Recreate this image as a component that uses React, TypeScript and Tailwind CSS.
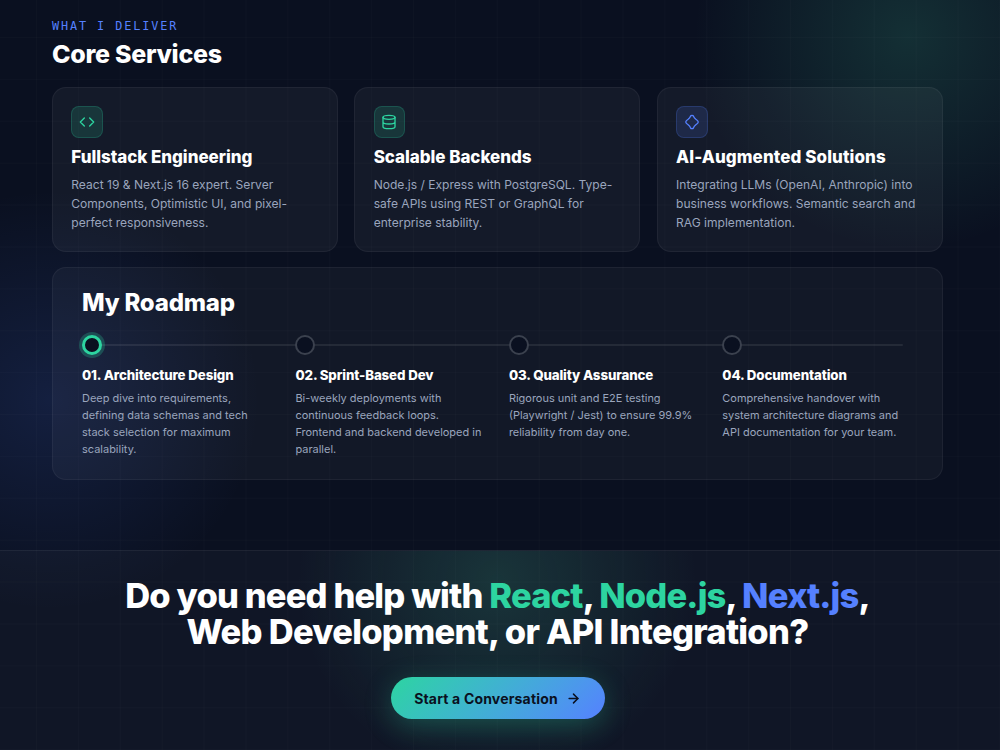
import React from "react";
import { ArrowRight } from "lucide-react";

const services = [
  { kind: "code", title: "Fullstack Engineering", track: "tracking-[-0.04px]", lines: ["React 19 & Next.js 16 expert. Server", "Components, Optimistic UI, and pixel-", "perfect responsiveness."] },
  { kind: "db", title: "Scalable Backends", track: "tracking-[-0.05px]", lines: ["Node.js / Express with PostgreSQL. Type-", "safe APIs using REST or GraphQL for", "enterprise stability."] },
  { kind: "ai", title: "AI-Augmented Solutions", track: "tracking-[0.09px]", lines: ["Integrating LLMs (OpenAI, Anthropic) into", "business workflows. Semantic search and", "RAG implementation."] },
];

const steps = [
  { title: "01. Architecture Design", lines: ["Deep dive into requirements,", "defining data schemas and tech", "stack selection for maximum", "scalability."] },
  { title: "02. Sprint-Based Dev", lines: ["Bi-weekly deployments with", "continuous feedback loops.", "Frontend and backend developed in", "parallel."] },
  { title: "03. Quality Assurance", lines: ["Rigorous unit and E2E testing", "(Playwright / Jest) to ensure 99.9%", "reliability from day one."] },
  { title: "04. Documentation", lines: ["Comprehensive handover with", "system architecture diagrams and", "API documentation for your team."] },
];

function Icon({ kind }: { kind: string }) {
  return (
    <svg width="16" height="16" viewBox="0 0 24 24" fill="none" stroke="currentColor" strokeWidth="2" strokeLinecap="round" strokeLinejoin="round">
      {kind === "code" && <path d="m8 6-6 6 6 6M16 6l6 6-6 6" />}
      {kind === "db" && (
        <>
          <ellipse cx="12" cy="5" rx="9" ry="3" />
          <path d="M3 5v14c0 1.66 4 3 9 3s9-1.34 9-3V5M3 12c0 1.66 4 3 9 3s9-1.34 9-3" />
        </>
      )}
      {kind === "ai" && (
        <path d="M9.8 3.2C10.6 1.6 13.4 1.6 14.2 3.2c.8 2 1.9 3.4 3.6 4.7 1.3.9 3.6 2.8 3.6 4.1s-2.3 3.2-3.6 4.1c-1.7 1.3-2.8 2.7-3.6 4.7-.8 1.6-3.6 1.6-4.4 0-.8-2-1.9-3.4-3.6-4.7C4.9 15.2 2.6 13.3 2.6 12s2.3-3.2 3.6-4.1c1.7-1.3 2.8-2.7 3.6-4.7Z" />
      )}
    </svg>
  );
}

export default function App() {
  return (
    <div className="relative h-[750px] w-[1000px] overflow-hidden bg-[#0a1020] font-['Inter',sans-serif] text-white">
      <div className="absolute inset-0 bg-[radial-gradient(circle_at_908px_36px,rgba(70,211,160,0.16),transparent_214px),radial-gradient(circle_at_50px_400px,rgba(79,124,255,0.14),transparent_210px)]" />
      <div className="absolute inset-0 bg-[linear-gradient(90deg,rgba(255,255,255,0.015)_1px,transparent_1px),linear-gradient(rgba(255,255,255,0.015)_1px,transparent_1px)] bg-size-[41.9px_41.9px] bg-position-[36px_37px]" />
      <main className="relative px-[52px] pt-[19px]">
        <p className="h-[14px] whitespace-pre font-['DejaVu_Sans_Mono',monospace] text-[11.8px] leading-[14px] tracking-[1.92px] text-[#5580ff]">WHAT I DELIVER</p>
        <h2 className="mt-[5px] text-[25px] font-extrabold leading-[32px] tracking-[-0.28px]">Core Services</h2>
        <div className="mt-[17px] grid w-[890.6px] grid-cols-3 gap-[16.6px]">
          {services.map((s) => (
            <section key={s.title} className="h-[165px] rounded-[14px] border border-white/[0.05] bg-white/[0.045] px-[18.3px] pt-[18px]">
              <div className={s.kind === "ai" ? "flex size-[31.5px] items-center justify-center rounded-[8px] border border-[#5580ff]/20 bg-[#5580ff]/15 text-[#5580ff]" : "flex size-[31.5px] items-center justify-center rounded-[8px] border border-[#2dd4a0]/20 bg-[#2dd4a0]/15 text-[#2dd4a0]"}>
                <Icon kind={s.kind} />
              </div>
              <h3 className={`mt-[7px] whitespace-nowrap text-[17px] font-extrabold leading-[24px] ${s.track}`}>{s.title}</h3>
              <div className="mt-[6.5px] text-[12.05px] leading-[19px] text-[#9aa5bd]">
                {s.lines.map((l) => <p key={l} className="whitespace-nowrap">{l}</p>)}
              </div>
            </section>
          ))}
        </div>
        <section className="mt-[15px] h-[213px] w-[891px] rounded-[14px] border border-white/[0.05] bg-white/[0.035] px-[29px] pt-[19px]">
          <h2 className="text-[24px] font-extrabold leading-[32px] tracking-[-0.2px]">My Roadmap</h2>
          <div className="relative mt-[16px]">
            <div className="absolute left-0 top-[9px] h-[2px] w-[821px] rounded-full bg-white/[0.08]" />
            <div className="grid grid-cols-[repeat(4,213.45px)]">
              {steps.map((s, i) => (
                <div key={s.title} className="relative">
                  <div className={i === 0 ? "size-[20px] rounded-full border-[3px] border-[#2dd4a0] bg-[#0a1020] ring-[3px] ring-[#2dd4a0]/25" : "size-[20px] rounded-full border-2 border-[#3b414e] bg-[#0a1020]"} />
                  <h4 className="mt-[10px] whitespace-nowrap text-[13.3px] font-extrabold leading-[20px] tracking-[-0.11px]">{s.title}</h4>
                  <div className="mt-[5px] text-[10.98px] leading-[17px] text-[#9aa5bd]">
                    {s.lines.map((l) => <p key={l} className="whitespace-nowrap">{l}</p>)}
                  </div>
                </div>
              ))}
            </div>
          </div>
        </section>
      </main>
      <footer className="relative mt-[70px] flex h-[200px] flex-col items-center border-t border-white/[0.06] bg-white/[0.027] bg-[radial-gradient(circle_at_497px_30px,rgba(70,211,160,0.16),transparent_200px)] pr-[5px] pt-[27px]">
        <h2 className="whitespace-nowrap text-center text-[34.5px] font-extrabold leading-[36px]">
          <span className="block tracking-[-0.84px]">Do you need help with <span className="text-[#2dd4a0]">React</span>, <span className="text-[#2dd4a0]">Node.js</span>, <span className="text-[#5580ff]">Next.js</span>,</span>
          <span className="block tracking-[-0.73px]">Web Development, or API Integration?</span>
        </h2>
        <button className="mt-[27px] flex h-[42px] w-[214px] items-center justify-center gap-[8px] rounded-full bg-linear-135 from-[#2dd4a0] to-[#5580ff] text-[14px] font-bold text-[#0a1020] shadow-[0_7px_28px_rgba(45,212,160,0.28)]">
          <span className="whitespace-nowrap tracking-[0.18px]">Start a Conversation</span>
          <ArrowRight size={15} strokeWidth={2.4} />
        </button>
      </footer>
    </div>
  );
}
